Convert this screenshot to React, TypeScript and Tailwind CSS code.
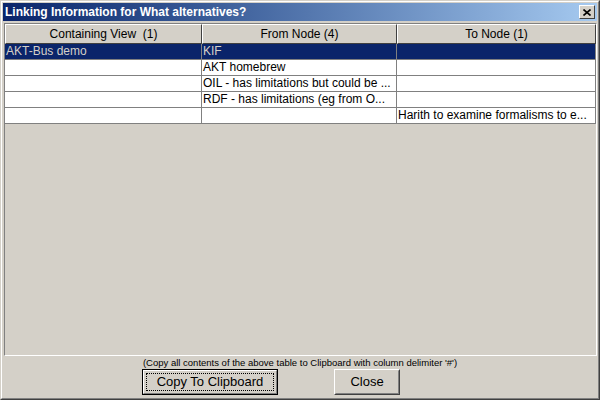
import React from "react";

const rows: [string, string, string][] = [
  ["AKT-Bus demo", "KIF", ""],
  ["", "AKT homebrew", ""],
  ["", "OIL - has limitations but could be ...", ""],
  ["", "RDF - has limitations (eg from O...", ""],
  ["", "", "Harith to examine formalisms to e..."],
];

const widths = ["w-[197px]", "w-[195px]", "w-[199px]"];
const headers = ["Containing View  (1)", "From Node (4)", "To Node (1)"];

export default function App() {
  return (
    <div
      className="w-[600px] h-[400px] bg-[#d4d0c8] border border-t-[#d4d0c8] border-l-[#d4d0c8] border-r-[#404040] border-b-[#404040] box-border"
      style={{ fontFamily: '"Liberation Sans", Arial, sans-serif' }}
    >
      <div className="w-full h-full border border-t-white border-l-white border-r-[#808080] border-b-[#808080] flex flex-col">
        {/* Title bar */}
        <div className="mx-[1px] mt-[1px] h-[18px] flex items-center justify-between bg-gradient-to-r from-[#0a246a] to-[#a6caf0]">
          <span className="pl-[2px] text-white font-bold text-[12px] leading-none">
            Linking Information for What alternatives?
          </span>
          <div className="mr-[2px] w-[16px] h-[14px] bg-[#d4d0c8] border border-t-white border-l-white border-r-[#404040] border-b-[#404040] flex items-center justify-center">
            <svg width="8" height="7" viewBox="0 0 8 7">
              <path d="M0.5 0.5 L7.5 6.5 M7.5 0.5 L0.5 6.5" stroke="#000" strokeWidth="1.6" />
            </svg>
          </div>
        </div>

        {/* Table panel */}
        <div className="ml-[2px] mt-[2px] w-[593px] h-[333px] border border-t-[#808080] border-l-[#808080] border-r-white border-b-white flex flex-col">
          <div className="flex h-[20px]">
            {headers.map((h, i) => (
              <div
                key={i}
                className={`${widths[i]} h-[20px] flex items-center justify-center text-[12px] text-black whitespace-pre border border-t-white border-l-white border-r-[#404040] border-b-[#404040] bg-[#d4d0c8] box-border`}
              >
                {h}
              </div>
            ))}
          </div>
          {rows.map((r, ri) => {
            const sel = ri === 0;
            return (
              <div key={ri} className="flex h-[16px]">
                {r.map((c, ci) => (
                  <div
                    key={ci}
                    className={`${widths[ci]} h-[16px] box-border border-r border-b border-[#808080] pl-[1px] text-[12px] leading-[15px] whitespace-nowrap overflow-hidden ${
                      sel ? "bg-[#0a246a] text-[#d4d0c8]" : "bg-white text-black"
                    }`}
                  >
                    {c}
                  </div>
                ))}
              </div>
            );
          })}
        </div>

        {/* Footer */}
        <div className="h-[13px] flex items-center justify-center text-[9.5px] text-black leading-none pt-[1px]">
          (Copy all contents of the above table to Clipboard with column delimiter '#')
        </div>
        <div className="flex pl-[140px] gap-[56px] h-[26px]">
          <div className="w-[136px] h-[26px] border border-black box-border">
            <div className="w-full h-full border border-t-white border-l-white border-r-[#808080] border-b-[#808080] p-[2px] box-border">
              <div className="w-full h-full border border-dotted border-black flex items-center justify-center text-[13px] text-black">
                Copy To Clipboard
              </div>
            </div>
          </div>
          <div className="w-[66px] h-[26px] border border-t-white border-l-white border-r-[#404040] border-b-[#404040] box-border">
            <div className="w-full h-full border border-t-[#d4d0c8] border-l-[#d4d0c8] border-r-[#808080] border-b-[#808080] flex items-center justify-center text-[13px] text-black">
              Close
            </div>
          </div>
        </div>
      </div>
    </div>
  );
}
